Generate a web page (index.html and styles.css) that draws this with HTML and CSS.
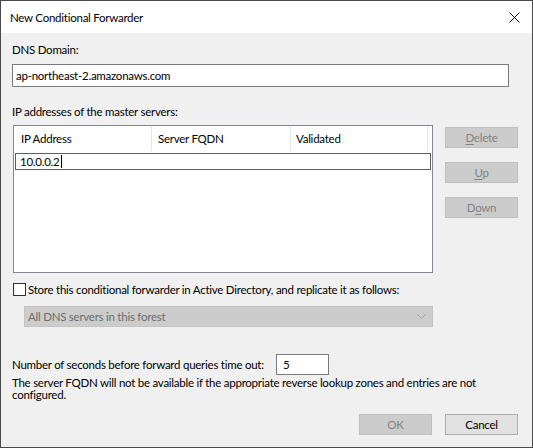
FILE: index.html
```html
<!DOCTYPE html>
<html>
<head>
<meta charset="utf-8">
<link rel="stylesheet" href="styles.css">
</head>
<body>
<div class="window">
  <div class="titlebar">
    <span class="title">New Conditional Forwarder</span>
    <svg class="close" width="11" height="11" viewBox="0 0 11 11"><path d="M0.5 0.5 L10.5 10.5 M10.5 0.5 L0.5 10.5" stroke="#000" stroke-width="1" fill="none"/></svg>
  </div>
  <div class="content">
    <div class="label">DNS Domain:</div>
    <div class="textbox domain">ap-northeast-2.amazonaws.com</div>
    <div class="label label-ip">IP addresses of the master servers:</div>
    <div class="ip-area">
      <div class="listbox">
        <div class="list-header">
          <div class="col col1">IP Address</div>
          <div class="col col2">Server FQDN</div>
          <div class="col col3">Validated</div>
        </div>
        <div class="edit-row"><span>10.0.0.2</span><span class="caret"></span></div>
      </div>
      <div class="side-buttons">
        <div class="btn disabled"><u>D</u>elete</div>
        <div class="btn disabled"><u>U</u>p</div>
        <div class="btn disabled">D<u>o</u>wn</div>
      </div>
    </div>
    <div class="check-row">
      <span class="checkbox"></span>
      <span class="check-label">Store this conditional forwarder in Active Directory, and replicate it as follows:</span>
    </div>
    <div class="combo">
      <span>All DNS servers in this forest</span>
      <svg class="chev" width="9" height="5" viewBox="0 0 9 5"><path d="M0.5 0.5 L4.5 4.5 L8.5 0.5" stroke="#a6a6a6" stroke-width="1" fill="none"/></svg>
    </div>
    <div class="timeout-row">
      <span class="timeout-label">Number of seconds before forward queries time out:</span>
      <div class="textbox timeout">5</div>
    </div>
    <div class="note">The server FQDN will not be available if the appropriate reverse lookup zones and entries are not<br>configured.</div>
    <div class="footer">
      <div class="btn disabled">OK</div>
      <div class="btn normal">Cancel</div>
    </div>
  </div>
</div>
</body>
</html>
```
FILE: styles.css
```css
html, body {
  margin: 0;
  padding: 0;
}
body {
  width: 533px;
  height: 448px;
  font-family: "Lato", "Noto Sans", sans-serif;
  font-size: 11.5px;
  letter-spacing: -0.25px;
  color: #000;
  background: #f0f0f0;
  overflow: hidden;
}
.window {
  box-sizing: border-box;
  width: 533px;
  height: 448px;
  border: 1px solid #4a4a4a;
  background: #f0f0f0;
  display: flex;
  flex-direction: column;
}
.titlebar {
  flex: none;
  height: 32px;
  background: #fff;
  display: flex;
  align-items: center;
  justify-content: space-between;
  padding: 0 12px 0 9px;
}
.title {
  line-height: 15px;
  margin-top: 1px;
}
.close {
  display: block;
}
.content {
  flex: 1;
  padding: 9px 0 0 11px;
}
.label {
  line-height: 15px;
  height: 15px;
}
.label-ip {
  margin-top: 17px;
}
.textbox {
  box-sizing: border-box;
  background: #fff;
  border: 1px solid #7a7a7a;
  white-space: nowrap;
}
.domain {
  margin-top: 7px;
  width: 497px;
  height: 23px;
  line-height: 21px;
  padding-left: 3px;
}
.ip-area {
  margin-top: 6px;
  display: flex;
  align-items: flex-start;
}
.listbox {
  box-sizing: border-box;
  margin-left: 1px;
  width: 420px;
  height: 148px;
  background: #fff;
  border: 1px solid #828790;
}
.list-header {
  display: flex;
  height: 25px;
}
.col {
  box-sizing: border-box;
  line-height: 25px;
  padding-left: 7px;
  border-right: 1px solid #e5e5e5;
  white-space: nowrap;
}
.col1 { width: 138px; }
.col2 { width: 139px; padding-left: 6px; }
.col3 { width: 137px; padding-left: 5px; }
.edit-row {
  box-sizing: border-box;
  margin: 2px 0 0 1px;
  width: 416px;
  height: 17px;
  border: 1px solid #5f5f5f;
  line-height: 15px;
  padding-left: 4px;
  display: flex;
  align-items: center;
}
.caret {
  display: inline-block;
  width: 1px;
  height: 13px;
  background: #000;
  margin-left: 1px;
}
.side-buttons {
  margin: 2px 0 0 12px;
  display: flex;
  flex-direction: column;
  gap: 14px;
}
.btn {
  box-sizing: border-box;
  width: 73px;
  height: 21px;
  line-height: 19px;
  text-align: center;
  border: 1px solid;
}
.btn.disabled {
  background: #cccccc;
  border-color: #bfbfbf;
  color: #838383;
}
.btn.normal {
  background: #e1e1e1;
  border-color: #adadad;
  color: #000;
}
.btn u {
  text-decoration-thickness: 1px;
  text-underline-offset: 2px;
}
.check-row {
  margin-top: 10px;
  display: flex;
  align-items: center;
  height: 13px;
}
.checkbox {
  box-sizing: border-box;
  margin-left: 1px;
  width: 13px;
  height: 13px;
  border: 1px solid #333;
  background: #fff;
}
.check-label {
  margin-left: 2px;
  line-height: 13px;
  white-space: nowrap;
}
.combo {
  box-sizing: border-box;
  margin: 10px 0 0 12px;
  width: 409px;
  height: 21px;
  background: #cccccc;
  border: 1px solid #c4c4c4;
  color: #6d6d6d;
  display: flex;
  align-items: center;
  justify-content: space-between;
  padding: 0 6px 0 3px;
}
.chev {
  display: block;
}
.timeout-row {
  margin-top: 27px;
  display: flex;
  align-items: center;
  height: 21px;
}
.timeout-label {
  width: 264px;
  white-space: nowrap;
}
.timeout {
  width: 53px;
  height: 21px;
  line-height: 19px;
  padding-left: 6px;
}
.note {
  margin-top: 2px;
  line-height: 12px;
  white-space: nowrap;
}
.footer {
  margin-top: 13px;
  display: flex;
  justify-content: flex-end;
  gap: 13px;
  padding-right: 14px;
}
```
